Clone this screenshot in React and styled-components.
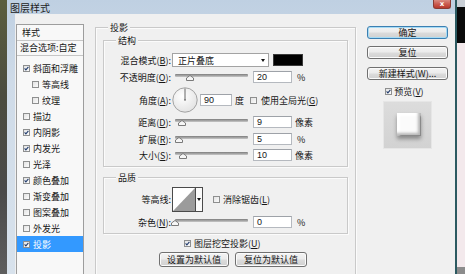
import React from "react";
import styled, { createGlobalStyle } from "styled-components";

const FONT = `"Noto Sans CJK SC", "Noto Sans", "Liberation Sans", sans-serif`;

const Global = createGlobalStyle`
  html, body { margin: 0; padding: 0; }
  body {
    width: 465px; height: 274px; overflow: hidden;
    background: #2f2f2f;
    font-family: ${FONT};
    font-size: 9px; line-height: 11px; color: #161616;
  }
  #root { width: 465px; height: 274px; }
`;

const Screen = styled.div`
  display: flex; width: 465px; height: 274px; overflow: hidden;
`;

const DesktopLeft = styled.div`
  width: 7px; flex: none;
  background: linear-gradient(180deg, #5b5e3e 0%, #4b4c3f 35%, #4a4a4a 70%, #5e5e5e 100%);
`;

const DesktopRight = styled.div`
  flex: 1; display: flex; flex-direction: column;
`;

const DeskBand = styled.div`
  height: ${(p) => p.$h}px; flex: ${(p) => (p.$h ? "none" : "1")};
  background: ${(p) => p.$bg};
`;

const Window = styled.div`
  width: 450px; flex: none; box-sizing: border-box;
  display: flex; flex-direction: column;
  background: linear-gradient(180deg, #bfd0e2 0%, #cfdbe8 30%, #d8e2ec 100%);
  border-right: 2px solid #2c5a61;
`;

const TitleBar = styled.div`
  height: 14px; flex: none;
  display: flex; justify-content: space-between; align-items: flex-start;
  padding: 0 4px 0 3px;
`;

const Title = styled.div`
  font-size: 10px; line-height: 11px; margin-top: 2px; color: #1c1c1c;
`;

const CloseBtn = styled.div`
  width: 18px; height: 9px; box-sizing: border-box;
  border: 1px solid #8a3b33; border-top: none; border-radius: 0 0 3px 3px;
  background: linear-gradient(180deg, #d98a80 0%, #c9574b 55%, #b8392d 100%);
  display: flex; align-items: center; justify-content: center;
  color: #fff; font-family: "DejaVu Sans", sans-serif; font-size: 7px; font-weight: bold; line-height: 7px;
`;

const FrameRow = styled.div`
  flex: 1; display: flex; padding-left: 8px; min-height: 0;
`;

const Client = styled.div`
  flex: 1; background: #f0f0f0; display: flex; align-items: flex-start; overflow: hidden;
`;

/* ---------- style list ---------- */
const StyleList = styled.div`
  margin: 10px 0 0 1px; width: 68px; height: 300px; flex: none; box-sizing: border-box;
  border: 1px solid #9d9d9d; background: #f8f8f8;
`;

const ListHeader = styled.div`
  height: 15px; line-height: 15px; padding-left: 5px; border-bottom: 1px solid #c6c6c6;
`;

const BlendRow = styled.div`
  height: 14px; line-height: 14px; padding-left: 3px; border-bottom: 1px solid #c6c6c6;
`;

const ListItems = styled.div`
  padding-top: 4px;
`;

const ListItem = styled.div`
  height: 16px; display: flex; align-items: center; gap: 3px;
  padding-left: ${(p) => (p.$indent ? 15 : 6)}px;
  background: ${(p) => (p.$selected ? "#3399ff" : "transparent")};
  color: ${(p) => (p.$selected ? "#fff" : "inherit")};
`;

/* ---------- checkbox ---------- */
const Box = styled.span`
  width: 7px; height: 7px; flex: none; box-sizing: border-box;
  border: 1px solid #8e8f8f;
  background: linear-gradient(135deg, #e3e3e3 0%, #fbfbfb 100%);
  display: inline-flex; align-items: center; justify-content: center;
  margin-left: ${(p) => p.$ml || 0}px;
`;

const Check = ({ checked, ml }) => (
  <Box $ml={ml}>
    {checked && (
      <svg width="5" height="5" viewBox="0 0 5 5">
        <path d="M0.6 2.4 L1.9 3.8 L4.4 0.8" fill="none" stroke="#233d6e" strokeWidth="1.1" />
      </svg>
    )}
  </Box>
);

/* ---------- group boxes ---------- */
const GroupBox = styled.div`
  position: relative; box-sizing: border-box;
  border: 1px solid #c9c9c9;
  box-shadow: inset 1px 1px 0 #fbfbfb, 1px 1px 0 #fbfbfb;
  width: ${(p) => p.$w}px;
  margin-top: ${(p) => p.$mt || 0}px;
  padding: ${(p) => p.$pad};
  height: ${(p) => (p.$h ? `${p.$h}px` : "auto")};
`;

const Legend = styled.span`
  position: absolute; top: -6px; left: 12px;
  padding: 0 2px; background: #f0f0f0; line-height: 11px;
`;

const MainGroup = styled(GroupBox)`
  margin-left: 11px; flex: none;
`;

const Row = styled.div`
  display: flex; align-items: center; height: ${(p) => p.$h}px;
`;

const Label = styled.div`
  width: 67px; flex: none; text-align: right; white-space: nowrap;
`;

const U = styled.span`
  text-decoration: underline;
`;

const Select = styled.div`
  margin-left: 1px; width: 97px; height: 14px; box-sizing: border-box;
  border: 1px solid #a3a3a3; background: #fff;
  display: flex; align-items: center; justify-content: space-between;
  padding: 0 3px 0 5px;
`;

const DownArrow = styled.span`
  width: 0; height: 0;
  border-left: 2.5px solid transparent; border-right: 2.5px solid transparent;
  border-top: 3px solid #111;
`;

const Swatch = styled.div`
  margin-left: 4px; width: 30px; height: 12px; box-sizing: border-box;
  background: #000; border: 1px solid #3a3a3a;
`;

const SliderWrap = styled.div`
  position: relative; margin-left: 4px; width: 73px; height: 10px; flex: none;
`;

const Track = styled.div`
  margin-top: 2px; height: 3px; border-radius: 1px;
  background: linear-gradient(180deg, #7d7d7d 0%, #a9a9a9 60%, #c8c8c8 100%);
`;

const Thumb = styled.svg`
  position: absolute; top: 3px; width: 8px; height: 6px;
`;

const Slider = ({ pct }) => (
  <SliderWrap>
    <Track />
    <Thumb viewBox="0 0 8 6" style={{ left: `calc(${pct}% - 4px)` }}>
      <polygon points="4,0.5 7.5,3 7.5,5.5 0.5,5.5 0.5,3" fill="#f6f6f6" stroke="#7a7a7a" strokeWidth="1" />
    </Thumb>
  </SliderWrap>
);

const Input = styled.div`
  margin-left: ${(p) => p.$ml}px; width: ${(p) => p.$w}px; height: 12px; box-sizing: border-box;
  border: 1px solid #b5b9bf; border-top-color: #9ea2a8; background: #fff;
  padding-left: 3px; line-height: 10px; font-family: "Liberation Sans", sans-serif; font-size: 9px;
`;

const Unit = styled.span`
  margin-left: ${(p) => p.$ml}px; white-space: nowrap;
`;

const DialSvg = styled.svg`
  margin-left: 1px; width: 26px; height: 26px; flex: none;
`;

const Dial = () => (
  <DialSvg viewBox="0 0 26 26">
    <defs>
      <radialGradient id="dg" cx="40%" cy="35%" r="70%">
        <stop offset="0%" stopColor="#ffffff" />
        <stop offset="100%" stopColor="#e2e2e2" />
      </radialGradient>
    </defs>
    <circle cx="13" cy="13" r="12.2" fill="url(#dg)" stroke="#9a9a9a" strokeWidth="0.9" />
    <line x1="13" y1="13" x2="13" y2="1.5" stroke="#555" strokeWidth="0.9" />
    <circle cx="13" cy="13" r="0.8" fill="#555" />
  </DialSvg>
);

const ContourBox = styled.div`
  margin-left: 1px; width: 31px; height: 25px; box-sizing: border-box;
  border: 1px solid #4a4a4a; background: #fff; display: flex; flex: none;
`;

const ContourPreview = styled.div`
  flex: 1; border-right: 1px solid #4a4a4a; display: flex;
`;

const ContourArrow = styled.div`
  width: 6px; display: flex; align-items: center; justify-content: center; background: #fafafa;
`;

const InlineCheck = styled.div`
  display: flex; align-items: center; gap: ${(p) => p.$gap || 3}px; margin-left: ${(p) => p.$ml || 0}px; white-space: nowrap;
`;

const KnockRow = styled.div`
  display: flex; align-items: center; gap: 3px; height: 12px; margin-top: 3px; padding-left: 81px;
`;

const ButtonRow = styled.div`
  display: flex; gap: 6px; margin-top: 3px; padding-left: 56px;
`;

const Button = styled.div`
  width: ${(p) => p.$w}px; height: ${(p) => p.$h || 15}px; box-sizing: border-box; flex: none;
  margin-top: ${(p) => p.$mt || 0}px;
  border: 1px solid ${(p) => (p.$default ? "#3c7fb1" : "#707070")};
  border-radius: 3px;
  background: linear-gradient(180deg, #f3f3f3 0%, #ebebeb 48%, #dcdcdc 52%, #d0d0d0 100%);
  box-shadow: inset 0 0 0 1px ${(p) => (p.$default ? "#a6dcf6" : "#fbfbfb")};
  display: flex; align-items: center; justify-content: center; white-space: nowrap;
`;

const RightCol = styled.div`
  margin: 12px 0 0 11px; width: 81px; flex: none;
  display: flex; flex-direction: column; align-items: center;
`;

const PreviewCheck = styled.div`
  display: flex; align-items: center; gap: 2px; margin-top: 7px; height: 8px; margin-left: -6px;
`;

const PreviewBox = styled.div`
  margin-top: 6px; width: 49px; height: 48px; box-sizing: border-box;
  background: linear-gradient(180deg, #dcdcdc, #d2d2d2);
  border: 1px solid #e6e6e6;
  display: flex; align-items: center; justify-content: center;
`;

const PreviewSquare = styled.div`
  width: 24px; height: 23px; margin: -2px 0 0 2px;
  background: #fbfbfb;
  box-shadow: inset -3px -3px 3px rgba(0,0,0,0.28), inset 3px 3px 2px #ffffff,
    inset 0 0 0 1px #bdbdbd, 0 3px 4px rgba(0,0,0,0.35);
`;

const listItems = [
  { t: "斜面和浮雕", c: true },
  { t: "等高线", c: false, indent: true },
  { t: "纹理", c: false, indent: true },
  { t: "描边", c: false },
  { t: "内阴影", c: true },
  { t: "内发光", c: true },
  { t: "光泽", c: false },
  { t: "颜色叠加", c: true },
  { t: "渐变叠加", c: false },
  { t: "图案叠加", c: false },
  { t: "外发光", c: false },
  { t: "投影", c: true, sel: true },
];

const SliderRow = ({ h, label, letter, pct, value, unit }) => (
  <Row $h={h}>
    <Label>
      {label}(<U>{letter}</U>):
    </Label>
    <Slider pct={pct} />
    <Input $ml={5} $w={39}>{value}</Input>
    <Unit $ml={unit === "%" ? 5 : 3}>{unit}</Unit>
  </Row>
);

export default function App() {
  return (
    <>
      <Global />
      <Screen>
        <DesktopLeft />
        <Window>
          <TitleBar>
            <Title>图层样式</Title>
            <CloseBtn>x</CloseBtn>
          </TitleBar>
          <FrameRow>
            <Client>
              <StyleList>
                <ListHeader>样式</ListHeader>
                <BlendRow>混合选项:自定</BlendRow>
                <ListItems>
                  {listItems.map((it) => (
                    <ListItem key={it.t} $indent={it.indent} $selected={it.sel}>
                      <Check checked={it.c} />
                      <span>{it.t}</span>
                    </ListItem>
                  ))}
                </ListItems>
              </StyleList>

              <MainGroup $w={261} $h={300} $mt={13} $pad="12px 7px 0 7px">
                <Legend>投影</Legend>
                <GroupBox $w={245} $pad="12px 0 3px 0">
                  <Legend>结构</Legend>
                  <Row $h={14}>
                    <Label>
                      混合模式(<U>B</U>):
                    </Label>
                    <Select>
                      <span>正片叠底</span>
                      <DownArrow />
                    </Select>
                    <Swatch />
                  </Row>
                  <SliderRow h={20} label="不透明度" letter="O" pct={20} value="20" unit="%" />
                  <Row $h={26}>
                    <Label>
                      角度(<U>A</U>):
                    </Label>
                    <Dial />
                    <Input $ml={2} $w={32}>90</Input>
                    <Unit $ml={3}>度</Unit>
                    <InlineCheck $ml={6} $gap={4}>
                      <Check checked={false} />
                      <span>
                        使用全局光(<U>G</U>)
                      </span>
                    </InlineCheck>
                  </Row>
                  <SliderRow h={18} label="距离" letter="D" pct={10} value="9" unit="像素" />
                  <SliderRow h={16} label="扩展" letter="R" pct={5} value="5" unit="%" />
                  <SliderRow h={16} label="大小" letter="S" pct={11} value="10" unit="像素" />
                </GroupBox>

                <GroupBox $w={245} $mt={10} $pad="8px 0 1px 0">
                  <Legend>品质</Legend>
                  <Row $h={26}>
                    <Label>等高线:</Label>
                    <ContourBox>
                      <ContourPreview>
                        <svg width="100%" height="100%" viewBox="0 0 23 23" preserveAspectRatio="none">
                          <polygon points="0,23 23,0 23,23" fill="#9b9b9b" />
                        </svg>
                      </ContourPreview>
                      <ContourArrow>
                        <DownArrow />
                      </ContourArrow>
                    </ContourBox>
                    <InlineCheck $ml={10} $gap={3}>
                      <Check checked={false} />
                      <span>
                        消除锯齿(<U>L</U>)
                      </span>
                    </InlineCheck>
                  </Row>
                  <SliderRow h={20} label="杂色" letter="N" pct={0} value="0" unit="%" />
                </GroupBox>

                <KnockRow>
                  <Check checked />
                  <span>
                    图层挖空投影(<U>U</U>)
                  </span>
                </KnockRow>
                <ButtonRow>
                  <Button $w={70}>设置为默认值</Button>
                  <Button $w={72}>复位为默认值</Button>
                </ButtonRow>
              </MainGroup>

              <RightCol>
                <Button $w={81} $h={13} $default>确定</Button>
                <Button $w={81} $h={13} $mt={7}>复位</Button>
                <Button $w={81} $h={13} $mt={8}>新建样式(W)...</Button>
                <PreviewCheck>
                  <Check checked />
                  <span>
                    预览(<U>V</U>)
                  </span>
                </PreviewCheck>
                <PreviewBox>
                  <PreviewSquare />
                </PreviewBox>
              </RightCol>
            </Client>
          </FrameRow>
        </Window>
        <DesktopRight>
          <DeskBand $h={7} $bg="#c9cfd6" />
          <DeskBand $h={36} $bg="#0a0a0a" />
          <DeskBand $bg="#f3e9ec" />
          <DeskBand $h={7} $bg="#8c8c8c" />
        </DesktopRight>
      </Screen>
    </>
  );
}
